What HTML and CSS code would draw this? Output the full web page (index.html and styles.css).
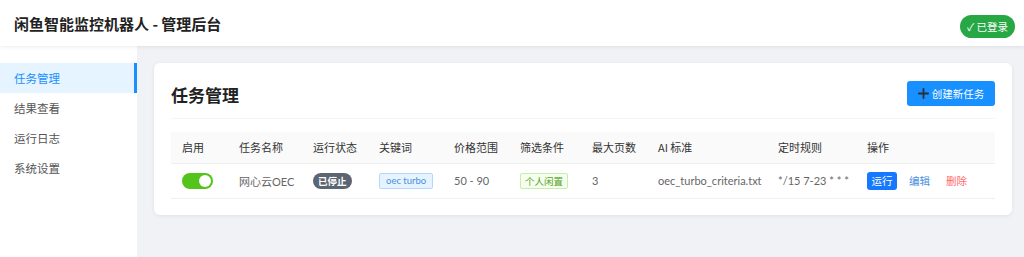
FILE: index.html
```html
<!DOCTYPE html>
<html lang="zh">
<head>
<meta charset="utf-8">
<title>闲鱼智能监控机器人 - 管理后台</title>
<link rel="stylesheet" href="styles.css">
</head>
<body>
<header class="topbar">
  <h1 class="brand">闲鱼智能监控机器人 - 管理后台</h1>
  <span class="login-badge">✓ 已登录</span>
</header>
<div class="layout">
  <nav class="sidebar">
    <a class="nav-item active">任务管理</a>
    <a class="nav-item">结果查看</a>
    <a class="nav-item">运行日志</a>
    <a class="nav-item">系统设置</a>
  </nav>
  <main class="content">
    <section class="card">
      <div class="card-head">
        <h2 class="card-title">任务管理</h2>
        <button class="btn-create">
          <svg class="plus" viewBox="0 0 12 12" width="11" height="11"><path d="M6 1v10M1 6h10" stroke="#2b2f36" stroke-width="2" stroke-linecap="round"/></svg>
          创建新任务
        </button>
      </div>
      <table class="tasks">
        <colgroup>
          <col class="c1"><col class="c2"><col class="c3"><col class="c4"><col class="c5"><col class="c6"><col class="c7"><col class="c8"><col class="c9"><col class="c10">
        </colgroup>
        <thead>
          <tr>
            <th>启用</th><th>任务名称</th><th>运行状态</th><th>关键词</th><th>价格范围</th><th>筛选条件</th><th>最大页数</th><th>AI 标准</th><th>定时规则</th><th>操作</th>
          </tr>
        </thead>
        <tbody>
          <tr>
            <td><span class="switch"><span class="knob"></span></span></td>
            <td>网心云OEC</td>
            <td><span class="tag-status">已停止</span></td>
            <td><span class="tag-kw">oec turbo</span></td>
            <td>50 - 90</td>
            <td><span class="tag-filter">个人闲置</span></td>
            <td>3</td>
            <td>oec_turbo_criteria.txt</td>
            <td>*/15 7-23 * * *</td>
            <td class="ops"><button class="btn-run">运行</button><a class="op-edit">编辑</a><a class="op-del">删除</a></td>
          </tr>
        </tbody>
      </table>
    </section>
  </main>
</div>
</body>
</html>
```
FILE: styles.css
```css
* { box-sizing: border-box; }
html, body { margin: 0; padding: 0; }
body {
  width: 1024px;
  height: 257px;
  overflow: hidden;
  background: #f0f2f5;
  font-family: "Lato", "Noto Sans CJK SC", sans-serif;
  color: #333;
}
.topbar {
  height: 46px;
  background: #fff;
  display: flex;
  align-items: center;
  justify-content: space-between;
  padding: 0 9px 0 14px;
  box-shadow: 0 1px 4px rgba(0,0,0,0.08);
  position: relative;
  z-index: 2;
}
.brand {
  margin: 0;
  font-size: 15px;
  font-weight: 700;
  color: #222;
  font-family: "Noto Sans CJK SC", sans-serif;
}
.login-badge {
  background: #28a745;
  color: #fff;
  font-size: 10.5px;
  height: 23px;
  line-height: 23px;
  padding: 0 7px;
  border-radius: 12px;
  margin-top: 6px;
  font-family: "Noto Sans CJK SC", sans-serif;
}
.layout {
  display: flex;
  height: 211px;
}
.sidebar {
  width: 137px;
  background: #fff;
  padding-top: 17px;
  display: flex;
  flex-direction: column;
}
.nav-item {
  height: 30px;
  line-height: 30px;
  padding-left: 14px;
  font-size: 11.5px;
  color: #555;
  font-family: "Noto Sans CJK SC", sans-serif;
}
.nav-item.active {
  background: #e6f4ff;
  color: #1890ff;
  border-right: 3px solid #1890ff;
}
.content {
  flex: 1;
  padding: 17px 12px 0 17px;
}
.card {
  background: #fff;
  border-radius: 6px;
  box-shadow: 0 1px 4px rgba(0,0,0,0.07);
  padding: 17px 17px 16px 17px;
}
.card-head {
  display: flex;
  justify-content: space-between;
  align-items: center;
  padding-bottom: 11px;
  border-bottom: 1px solid #f5f5f5;
  margin-bottom: 13px;
}
.card-title {
  margin: 2px 0 0;
  font-size: 17px;
  font-weight: 700;
  color: #222;
  font-family: "Noto Sans CJK SC", sans-serif;
}
.btn-create {
  width: 88px;
  height: 25px;
  background: #1890ff;
  color: #fff;
  border: 0;
  border-radius: 3px;
  font-size: 10.5px;
  display: flex;
  align-items: center;
  justify-content: center;
  gap: 3px;
  padding: 0;
  font-family: "Noto Sans CJK SC", sans-serif;
}
.tasks {
  width: 824px;
  border-collapse: collapse;
  table-layout: fixed;
  font-size: 11px;
}
.c1 { width: 57px; } .c2 { width: 74px; } .c3 { width: 66px; } .c4 { width: 75px; }
.c5 { width: 66px; } .c6 { width: 72px; } .c7 { width: 66px; } .c8 { width: 120px; }
.c9 { width: 89px; } .c10 { width: 139px; }
.tasks th {
  background: #fafafa;
  height: 31px;
  text-align: left;
  font-weight: 400;
  color: #333;
  padding: 0 11px;
  font-family: "Noto Sans CJK SC", sans-serif;
  border-bottom: 1px solid #f0f0f0;
}
.tasks td {
  height: 35px;
  padding: 0 11px;
  color: #666;
  border-bottom: 1px solid #f0f0f0;
  white-space: nowrap;
  font-family: "Lato", "Noto Sans CJK SC", sans-serif;
}
.switch {
  display: inline-block;
  vertical-align: middle;
  width: 31px;
  height: 16px;
  border-radius: 8px;
  background: #52c41a;
  position: relative;
}
.knob {
  position: absolute;
  right: 2px;
  top: 2px;
  width: 12px;
  height: 12px;
  border-radius: 50%;
  background: #fff;
}
.tag-status {
  display: inline-block;
  background: #5c6672;
  color: #fff;
  font-size: 9.5px;
  height: 16px;
  line-height: 16px;
  padding: 0 5px;
  border-radius: 8px;
  font-weight: 700;
  font-family: "Noto Sans CJK SC", sans-serif;
}
.tag-kw {
  display: inline-block;
  background: #e6f4ff;
  border: 1px solid #b3d8ff;
  color: #4a8fdc;
  font-size: 9.5px;
  height: 16px;
  line-height: 14px;
  padding: 0 6px;
  border-radius: 2px;
}
.tag-filter {
  display: inline-block;
  background: #f6ffed;
  border: 1px solid #c6eeaa;
  color: #52a32a;
  font-size: 9.5px;
  height: 16px;
  line-height: 14px;
  padding: 0 4px;
  border-radius: 2px;
  font-family: "Noto Sans CJK SC", sans-serif;
}
.ops { font-family: "Noto Sans CJK SC", sans-serif; }
.btn-run {
  background: #1677ff;
  color: #fff;
  border: 0;
  border-radius: 3px;
  font-size: 10.5px;
  width: 30px;
  height: 18px;
  padding: 0;
  vertical-align: middle;
  font-family: "Noto Sans CJK SC", sans-serif;
}
.op-edit {
  color: #4a90e2;
  font-size: 10.5px;
  margin-left: 12px;
  vertical-align: middle;
}
.op-del {
  color: #ff6b6b;
  font-size: 10.5px;
  margin-left: 16px;
  vertical-align: middle;
}
```
